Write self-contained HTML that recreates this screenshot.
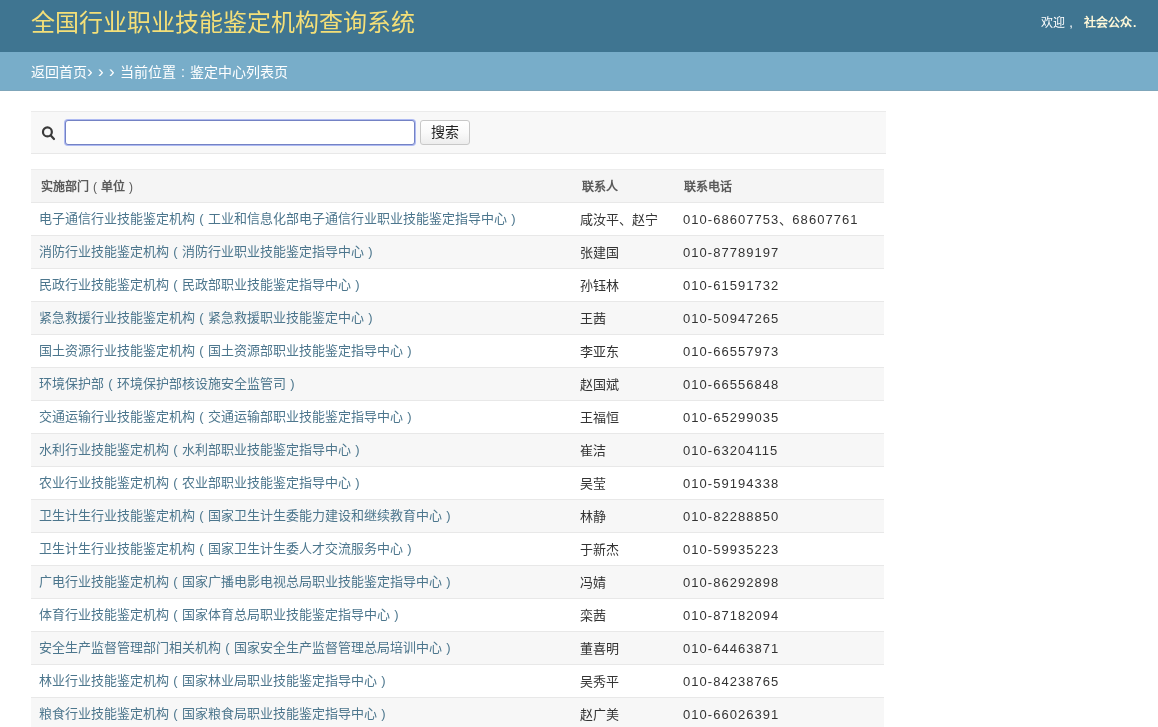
<!DOCTYPE html>
<html lang="zh-CN">
<head>
<meta charset="utf-8">
<style>
html,body{margin:0;padding:0;}
body{width:1158px;height:727px;overflow:hidden;background:#fff;font-family:"Liberation Sans",sans-serif;position:relative;}
.hd{position:absolute;left:0;top:0;width:1158px;height:52px;background:#3f7591;}
.title{position:absolute;left:31px;top:8px;font-size:24px;line-height:30px;color:#f4df78;white-space:nowrap;}
.welcome{position:absolute;left:0;top:15px;font-size:12px;line-height:16px;color:#fff;white-space:nowrap;}
.w1{position:absolute;left:1041px;top:0;}
.cm{display:inline-block;width:12px;text-align:center;font-size:13px;}
.w2{position:absolute;left:1084px;top:0;}
.welcome b{color:#fff8d8;}
.bc{position:absolute;left:0;top:52px;width:1158px;height:38px;background:#78adc9;border-bottom:1px solid #7fa6ba;}
.bct{position:absolute;left:31px;top:11px;font-size:14px;line-height:18px;color:#fff;white-space:nowrap;}
.ch{display:inline-block;width:11px;text-align:left;font-size:17px;line-height:18px;vertical-align:top;}
.sp{position:absolute;left:31px;top:111px;width:855px;height:41px;background:#f8f8f8;border-top:1px solid #ebebeb;border-bottom:1px solid #e8e8e8;}
.icon{position:absolute;left:9px;top:13px;}
.inp{position:absolute;left:34px;top:8px;width:348px;height:23px;border:1px solid #7482c4;border-radius:3px;background:#fff;box-shadow:0 0 0 1px rgba(150,165,240,.75);}
.btn{position:absolute;left:389px;top:8px;width:48px;height:23px;border:1px solid #c8c8c8;border-radius:3px;background:linear-gradient(#ffffff,#fafafa 50%,#ededed);font-size:14px;line-height:23px;text-align:center;color:#222;}
table{position:absolute;left:31px;top:169px;width:853px;border-collapse:collapse;}
th{height:32px;background:#f5f5f5;font-size:12px;font-weight:bold;color:#5a5a5a;text-align:left;padding:0;border-top:1px solid #ececec;border-bottom:1px solid #e8e8e8;}
td{height:32px;font-size:13px;color:#333;padding:0;border-bottom:1px solid #e8e8e8;white-space:nowrap;}
tr.e td{background:#f7f7f7;}
th.c1{padding-left:10px;width:531px;}
td.c1{padding-left:8px;}
th.c2{padding-left:10px;width:92px;}
td.c2{padding-left:8px;}
th.c3{padding-left:10px;}
td.c3{padding-left:9px;}
td a{color:#4c768d;position:relative;top:-2px;}
th span.cj{position:relative;top:-1px;}
td.c2 span.cj{position:relative;top:-1px;}
.p{display:inline-block;width:1em;text-align:center;}
.n{letter-spacing:1.04px;}
.dg{position:relative;}
tr:nth-child(2) .dg{top:-1px;}
.gs{position:absolute;left:0;top:0;width:1158px;height:727px;will-change:transform;}
th .p{font-weight:normal;}
</style>
</head>
<body>
<div class="gs">
<div class="hd"><div class="title">全国行业职业技能鉴定机构查询系统</div><div class="welcome"><span class="w1">欢迎<span class="cm">,</span></span><b class="w2">社会公众<span style="margin-left:1px">.</span></b></div></div>
<div class="bc"><div class="bct">返回首页<span class="ch">›</span><span class="ch">›</span><span class="ch">›</span>当前位置<span class="p">:</span>鉴定中心列表页</div></div>
<div class="sp">
<svg class="icon" width="18" height="18" viewBox="0 0 18 18"><circle cx="7.4" cy="6.9" r="4.45" fill="none" stroke="#3a3a3a" stroke-width="2.2"/><line x1="10.8" y1="10.4" x2="14.0" y2="14.0" stroke="#3a3a3a" stroke-width="2.2" stroke-linecap="round"/></svg>
<div class="inp"></div>
<div class="btn">搜索</div>
</div>
<table>
<tr><th class="c1"><span class="cj">实施部门<span class="p">(</span>单位<span class="p">)</span></span></th><th class="c2"><span class="cj">联系人</span></th><th class="c3"><span class="cj">联系电话</span></th></tr>
<tr><td class="c1"><a>电子通信行业技能鉴定机构<span class="p">(</span>工业和信息化部电子通信行业职业技能鉴定指导中心<span class="p">)</span></a></td><td class="c2"><span class="cj">咸汝平、赵宁</span></td><td class="c3"><span class="dg"><span class="n">010-68607753</span>、<span class="n">68607761</span></span></td></tr>
<tr class="e"><td class="c1"><a>消防行业技能鉴定机构<span class="p">(</span>消防行业职业技能鉴定指导中心<span class="p">)</span></a></td><td class="c2"><span class="cj">张建国</span></td><td class="c3"><span class="dg"><span class="n">010-87789197</span></span></td></tr>
<tr><td class="c1"><a>民政行业技能鉴定机构<span class="p">(</span>民政部职业技能鉴定指导中心<span class="p">)</span></a></td><td class="c2"><span class="cj">孙钰林</span></td><td class="c3"><span class="dg"><span class="n">010-61591732</span></span></td></tr>
<tr class="e"><td class="c1"><a>紧急救援行业技能鉴定机构<span class="p">(</span>紧急救援职业技能鉴定中心<span class="p">)</span></a></td><td class="c2"><span class="cj">王茜</span></td><td class="c3"><span class="dg"><span class="n">010-50947265</span></span></td></tr>
<tr><td class="c1"><a>国土资源行业技能鉴定机构<span class="p">(</span>国土资源部职业技能鉴定指导中心<span class="p">)</span></a></td><td class="c2"><span class="cj">李亚东</span></td><td class="c3"><span class="dg"><span class="n">010-66557973</span></span></td></tr>
<tr class="e"><td class="c1"><a>环境保护部<span class="p">(</span>环境保护部核设施安全监管司<span class="p">)</span></a></td><td class="c2"><span class="cj">赵国斌</span></td><td class="c3"><span class="dg"><span class="n">010-66556848</span></span></td></tr>
<tr><td class="c1"><a>交通运输行业技能鉴定机构<span class="p">(</span>交通运输部职业技能鉴定指导中心<span class="p">)</span></a></td><td class="c2"><span class="cj">王福恒</span></td><td class="c3"><span class="dg"><span class="n">010-65299035</span></span></td></tr>
<tr class="e"><td class="c1"><a>水利行业技能鉴定机构<span class="p">(</span>水利部职业技能鉴定指导中心<span class="p">)</span></a></td><td class="c2"><span class="cj">崔洁</span></td><td class="c3"><span class="dg"><span class="n">010-63204115</span></span></td></tr>
<tr><td class="c1"><a>农业行业技能鉴定机构<span class="p">(</span>农业部职业技能鉴定指导中心<span class="p">)</span></a></td><td class="c2"><span class="cj">吴莹</span></td><td class="c3"><span class="dg"><span class="n">010-59194338</span></span></td></tr>
<tr class="e"><td class="c1"><a>卫生计生行业技能鉴定机构<span class="p">(</span>国家卫生计生委能力建设和继续教育中心<span class="p">)</span></a></td><td class="c2"><span class="cj">林静</span></td><td class="c3"><span class="dg"><span class="n">010-82288850</span></span></td></tr>
<tr><td class="c1"><a>卫生计生行业技能鉴定机构<span class="p">(</span>国家卫生计生委人才交流服务中心<span class="p">)</span></a></td><td class="c2"><span class="cj">于新杰</span></td><td class="c3"><span class="dg"><span class="n">010-59935223</span></span></td></tr>
<tr class="e"><td class="c1"><a>广电行业技能鉴定机构<span class="p">(</span>国家广播电影电视总局职业技能鉴定指导中心<span class="p">)</span></a></td><td class="c2"><span class="cj">冯婧</span></td><td class="c3"><span class="dg"><span class="n">010-86292898</span></span></td></tr>
<tr><td class="c1"><a>体育行业技能鉴定机构<span class="p">(</span>国家体育总局职业技能鉴定指导中心<span class="p">)</span></a></td><td class="c2"><span class="cj">栾茜</span></td><td class="c3"><span class="dg"><span class="n">010-87182094</span></span></td></tr>
<tr class="e"><td class="c1"><a>安全生产监督管理部门相关机构<span class="p">(</span>国家安全生产监督管理总局培训中心<span class="p">)</span></a></td><td class="c2"><span class="cj">董喜明</span></td><td class="c3"><span class="dg"><span class="n">010-64463871</span></span></td></tr>
<tr><td class="c1"><a>林业行业技能鉴定机构<span class="p">(</span>国家林业局职业技能鉴定指导中心<span class="p">)</span></a></td><td class="c2"><span class="cj">吴秀平</span></td><td class="c3"><span class="dg"><span class="n">010-84238765</span></span></td></tr>
<tr class="e"><td class="c1"><a>粮食行业技能鉴定机构<span class="p">(</span>国家粮食局职业技能鉴定指导中心<span class="p">)</span></a></td><td class="c2"><span class="cj">赵广美</span></td><td class="c3"><span class="dg"><span class="n">010-66026391</span></span></td></tr>
</table>
</div>
</body>
</html>
